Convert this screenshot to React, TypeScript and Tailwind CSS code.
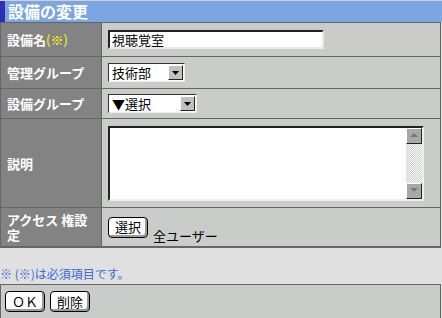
const jp = '"Noto Sans CJK JP", "Noto Sans", sans-serif';

function DropButton() {
  return (
    <div className="w-[15px] h-full bg-[#c0c0c0] border border-t-white border-l-white border-r-[#222] border-b-[#222] flex items-center justify-center">
      <svg width="7" height="4" viewBox="0 0 7 4">
        <path d="M0 0h7L3.5 4z" fill="#000" />
      </svg>
    </div>
  );
}

function Select({ label, width }: { label: string; width: string }) {
  return (
    <div className={`${width} h-[19px] bg-white border border-t-[#333] border-l-[#333] border-r-[#eee] border-b-[#eee] flex items-stretch p-[1px] pl-[3px]`}>
      <span className="flex-1 text-[13px] leading-[15px] text-black">{label}</span>
      <DropButton />
    </div>
  );
}

function Btn({ children, w }: { children: React.ReactNode; w: string }) {
  return (
    <div className={`${w} h-[21px] bg-white border border-black rounded-[4px] shadow-[inset_-2px_-2px_0_#9a9a9a] flex items-center justify-center text-[13px] text-black`}>
      {children}
    </div>
  );
}

function Row({ label, h, children }: { label: React.ReactNode; h: string; children: React.ReactNode }) {
  return (
    <div className={`flex ${h} border-b border-[#666]`}>
      <div className="w-[101px] shrink-0 bg-[#838383] border-r border-[#666] flex items-center pl-[6px] pr-[4px] text-[13px] font-bold text-white leading-[15px]">
        {label}
      </div>
      <div className="flex-1 bg-[#c9ccc8] flex items-center pl-[6px]">{children}</div>
    </div>
  );
}

export default function App() {
  return (
    <div className="w-[442px] h-[318px] bg-[#e0e0e0] overflow-hidden" style={{ fontFamily: jp }}>
      <div className="h-[22px] border-t border-[#d0d0d0] bg-[#7ca6e2] flex">
        <div className="w-[5px] bg-[#2a2fb5]" />
        <div className="pl-[3px] text-[16px] font-bold text-white leading-[21px]">設備の変更</div>
      </div>

      <div className="w-[441px] border border-[#666]">
        <Row h="h-[34px]" label={<span>設備名<span className="text-[#ffff00] font-normal">(※)</span></span>}>
          <div className="w-[216px] h-[19px] bg-white border-2 border-t-[#222] border-l-[#222] border-r-[#e8e8e8] border-b-[#e8e8e8] pl-[2px] text-[13px] leading-[15px] text-black">
            視聴覚室
          </div>
        </Row>
        <Row h="h-[32px]" label="管理グループ">
          <Select label="技術部" width="w-[77px]" />
        </Row>
        <Row h="h-[30px]" label="設備グループ">
          <Select label="▼選択" width="w-[89px]" />
        </Row>
        <Row h="h-[89px]" label="説明">
          <div className="w-[316px] h-[75px] bg-white border-2 border-t-[#222] border-l-[#222] border-r-[#eee] border-b-[#eee] flex justify-end">
            <div className="w-[16px] h-full bg-[repeating-conic-gradient(#d4d4d4_0_25%,#f4f4f4_0_50%)] bg-[length:2px_2px] flex flex-col justify-between">
              <div className="h-[16px] bg-[#a8a8a8] border border-t-white border-l-white border-r-[#222] border-b-[#222] flex items-center justify-center">
                <svg width="8" height="5" viewBox="0 0 8 5"><path d="M4 0L8 4H0z" fill="#777" /></svg>
              </div>
              <div className="h-[16px] bg-[#a8a8a8] border border-t-white border-l-white border-r-[#222] border-b-[#222] flex items-center justify-center">
                <svg width="8" height="5" viewBox="0 0 8 5"><path d="M0 0h8L4 4z" fill="#777" /></svg>
              </div>
            </div>
          </div>
        </Row>
        <Row h="h-[39px]" label="アクセス 権設定">
          <Btn w="w-[40px]">選択</Btn>
          <span className="ml-[5px] mt-[16px] text-[13px] text-black leading-[15px]">全ユーザー</span>
        </Row>
      </div>

      <div className="h-[36px] flex items-end pb-[3px] text-[12px] text-[#3a6cd4] leading-[15px]">
        ※ (※)は必須項目です。
      </div>

      <div className="w-[441px] h-[35px] border border-[#666] bg-[#c9ccc8] flex items-center pl-[4px] gap-[5px]">
        <Btn w="w-[40px]">ＯＫ</Btn>
        <Btn w="w-[40px]">削除</Btn>
      </div>
    </div>
  );
}
